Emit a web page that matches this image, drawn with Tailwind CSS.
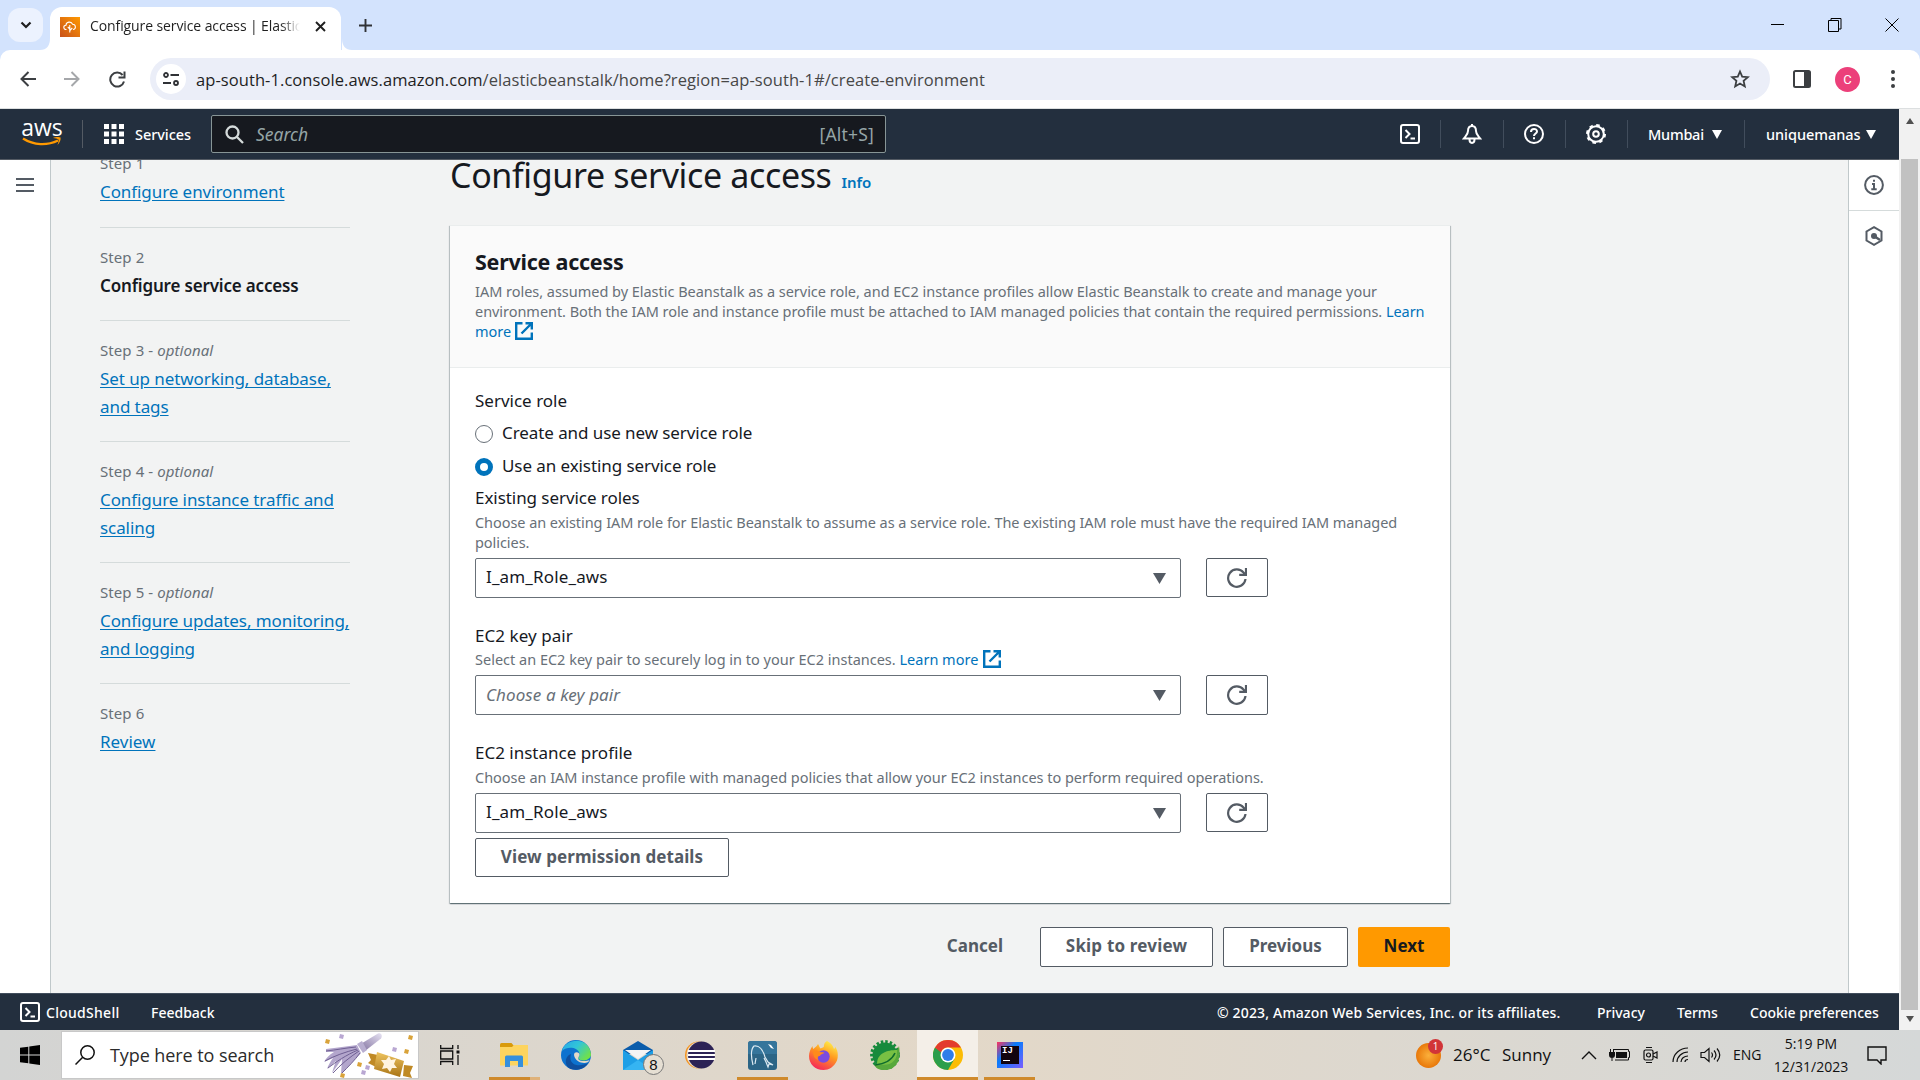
<!DOCTYPE html>
<html lang="en">
<head>
<meta charset="utf-8">
<title>Configure service access | Elastic Beanstalk</title>
<script src="https://cdn.jsdelivr.net/npm/@tailwindcss/browser@4"></script>
</head>
<body class="w-[1920px] h-[1080px] overflow-hidden flex flex-col bg-white font-['Noto_Sans',sans-serif] text-[#16191f] whitespace-nowrap">

<!-- Tab strip -->
<div class="h-[50px] shrink-0 bg-[#d3e3fd] flex items-end pl-2">
  <div class="w-[35px] h-[34px] mb-2 rounded-xl bg-[#ecf2fe] flex items-center justify-center">
    <svg class="w-3 h-3" viewBox="0 0 12 12" fill="none" stroke="#1f1f1f" stroke-width="2.2"><path d="M1.5 3.5 6 8l4.500-4.500"/></svg>
  </div>
  <svg class="w-[10px] h-3 -ml-[3px]" viewBox="0 0 10 12"><path d="M10 0v12H0Q10 12 10 0z" fill="#fff"/></svg>
  <div class="w-[291px] h-[43px] bg-white rounded-t-[12px] flex items-center pl-[10px] pb-[7px]">
    <svg class="w-5 h-5 mt-[3px]" viewBox="0 0 20 20"><defs><linearGradient id="eb" x1="0" y1="1" x2="1" y2="0"><stop offset="0" stop-color="#c8511b"/><stop offset="1" stop-color="#f90"/></linearGradient></defs><rect width="20" height="20" fill="url(#eb)"/><path d="M6.500 12.500C3 12.500 3 8.500 6 8.300 6 4.500 11.500 4 12.500 7.200c3.500-.2 4 5.300.5 5.300M9.800 15.500V8M9.800 12l-2-2M9.800 13.500l2.500-2.500" fill="none" stroke="#fff" stroke-width="1.100"/></svg>
    <div class="ml-[10px] mt-[2px] w-[212px] overflow-hidden text-[14px] leading-5 tracking-[-0.100px] font-['Open_Sans',sans-serif] text-[#1f1f1f] [mask-image:linear-gradient(to_right,black_90%,transparent_99%)]">Configure service access | Elastic</div>
    <svg class="w-[11px] h-[11px] ml-[13px] mt-[2px]" viewBox="0 0 11 11" stroke="#1f1f1f" stroke-width="1.900"><path d="M1 1l9 9M10 1l-9 9"/></svg>
  </div>
  <svg class="w-3 h-3" viewBox="0 0 10 12"><path d="M0 0v12h10Q0 12 0 0z" fill="#fff"/></svg>
  <svg class="w-[13px] h-[13px] ml-[6px] mb-[18px]" viewBox="0 0 13 13" stroke="#303236" stroke-width="1.900"><path d="M6.500 0v13M0 6.500h13"/></svg>
  <div class="flex ml-auto pr-[21px] mb-[18px] items-center gap-[43px]">
    <svg class="w-[14px] h-[14px]" viewBox="0 0 14 14" stroke="#000"><path d="M0 6.500h13"/></svg>
    <svg class="w-[14px] h-[14px]" viewBox="0 0 14 14" fill="none" stroke="#000"><path d="M.5 2.500h10v11H.5zM3 2.500V.5h10v10.500h-2"/></svg>
    <svg class="w-[14px] h-[14px]" viewBox="0 0 14 14" stroke="#000"><path d="M.5.500l13 13M13.500.5l-13 13"/></svg>
  </div>
</div>

<!-- Address bar -->
<div class="h-[59px] shrink-0 bg-[#d3e3fd]">
<div class="h-full bg-white rounded-t-[10px] border-b border-[#dcdfe0] flex items-center pl-5">
  <svg class="w-4 h-4" viewBox="0 0 16 16" fill="none" stroke="#3c3f42" stroke-width="2"><path d="M16 8H2M8.500 1 1.500 8l7 7"/></svg>
  <svg class="w-4 h-4 ml-7" viewBox="0 0 16 16" fill="none" stroke="#a5a7aa" stroke-width="2"><path d="M0 8h14M7.500 1l7 7-7 7"/></svg>
  <svg class="w-[17px] h-[17px] ml-[29px]" viewBox="0 0 17 17" fill="none" stroke="#3c3f42" stroke-width="2"><path d="M15 10.500A7 7 0 1 1 13.600 4M15.500.5v6h-6"/></svg>
  <div class="w-[1620px] h-[42px] ml-6 rounded-full bg-[#ebeef8] flex items-center pl-[6px] pr-[20px]">
    <div class="w-[30px] h-[30px] rounded-full bg-white flex items-center justify-center">
      <svg class="w-4 h-[14px]" viewBox="0 0 16 14" fill="none" stroke="#303236" stroke-width="1.800"><circle cx="3" cy="3" r="2"/><path d="M7.500 3H16M0 11h8"/><circle cx="13" cy="11" r="2"/></svg>
    </div>
    <div class="ml-[10px] mt-[2px] text-[16.500px] leading-6 tracking-[0.075px] text-[#474747] font-['Open_Sans',sans-serif]"><span class="text-[#1f1f1f]">ap-south-1.console.aws.amazon.com</span>/elasticbeanstalk/home?region=ap-south-1#/create-environment</div>
    <svg class="w-5 h-5 ml-auto" viewBox="0 0 20 20" fill="none" stroke="#3c3f42" stroke-width="1.800"><path d="M10 2.500l2.200 5.200 5.600.5-4.200 3.700 1.200 5.500L10 14.500l-4.800 2.900 1.200-5.500L2.200 8.200l5.600-.5z"/></svg>
  </div>
  <svg class="w-[18px] h-[18px] ml-[23px]" viewBox="0 0 18 18"><rect x="1" y="1" width="16" height="16" rx="1.500" fill="none" stroke="#3c3f42" stroke-width="2"/><path d="M11 1h6v16h-6z" fill="#3c3f42"/></svg>
  <div class="w-[25px] h-[25px] ml-[24px] rounded-full bg-[#ec407a] text-white text-[13px] leading-[25px] text-center font-[Roboto,sans-serif]">C</div>
  <svg class="w-1 h-[18px] ml-[31px]" viewBox="0 0 4 18" fill="#3c3f42"><circle cx="2" cy="2" r="2"/><circle cx="2" cy="9" r="2"/><circle cx="2" cy="16" r="2"/></svg>
</div>
</div>

<div class="flex h-[921px] shrink-0">
<div class="w-[1899px] flex flex-col">

<!-- AWS navigation -->
<div class="h-[51px] shrink-0 bg-[#232f3e] border-b border-[#545b64] flex items-center text-white text-[14.500px] leading-5 font-medium">
  <div class="ml-[22px] w-[40px] h-[30px] flex flex-col items-center">
    <span class="text-[23px] leading-[18px] -mt-[1px] font-medium font-['Open_Sans',sans-serif] h-[18px]">aws</span>
    <svg class="w-10 h-3" viewBox="0 0 40 12"><path d="M1 2.500C12 9.500 25 9.800 36 4.500" fill="none" stroke="#f90" stroke-width="2.400"/><path d="M31 2c3-1.500 6.500-1 7.500-.5.5 2-.5 5-3 7.500 1-3 1.500-4.500 1-5.500-1-1-3-1.200-5.500-1.500z" fill="#f90"/></svg>
  </div>
  <div class="ml-[20px] w-px h-7 bg-[#545b64]"></div>
  <svg class="ml-[21px] w-5 h-5" viewBox="0 0 20 20" fill="#fff"><path d="M0 0h5v5H0zM7.500 0h5v5h-5zM15 0h5v5h-5zM0 7.500h5v5H0zM7.500 7.500h5v5h-5zM15 7.500h5v5h-5zM0 15h5v5H0zM7.500 15h5v5h-5zM15 15h5v5h-5z"/></svg>
  <span class="ml-[11px] w-[55px] tracking-[-0.050px]">Services</span>
  <div class="ml-[21px] w-[675px] h-[38px] bg-[#16191f] border border-[#879596] rounded-[2px] flex items-center px-[13px] text-[#95a5a6] text-[17.500px] leading-6 font-normal">
    <svg class="w-[19px] h-[19px]" viewBox="0 0 19 19" fill="none" stroke="#d5dbdb" stroke-width="2.300"><circle cx="7.500" cy="7.500" r="6"/><path d="M12 12l6 6"/></svg>
    <span class="ml-[12px] -mt-px italic">Search</span>
    <span class="ml-auto -mt-px -mr-[2px] tracking-[0.200px]">[Alt+S]</span>
  </div>
  <div class="ml-auto flex items-center">
    <svg class="w-5 h-5" viewBox="0 0 20 20" fill="none" stroke="#fff" stroke-width="2"><rect x="1" y="1" width="18" height="18" rx="2"/><path d="M5.500 6l4 4-4 4M10.500 14.500H15"/></svg>
    <div class="ml-5 w-px h-7 bg-[#414d5c]"></div>
    <svg class="ml-[21px] w-5 h-5" viewBox="0 0 20 20" fill="none" stroke="#fff" stroke-width="2"><path d="M10 2C6.500 2 6 5 6 7 6 10.500 3.500 12 1.800 14.500h16.400C16.500 12 14 10.500 14 7 14 5 13.500 2 10 2zM7.500 15.500c0 4.500 5 4.500 5 0M10 0v2"/></svg>
    <div class="ml-[21px] w-px h-7 bg-[#414d5c]"></div>
    <svg class="ml-[20px] w-5 h-5" viewBox="0 0 20 20" fill="none" stroke="#fff" stroke-width="2"><circle cx="10" cy="10" r="9"/><path d="M7 8c0-4 6-4 6-.5 0 2-3 2-3 4.500M10 13.300v2"/></svg>
    <div class="ml-[21px] w-px h-7 bg-[#414d5c]"></div>
    <svg class="ml-[20px] w-5 h-5" viewBox="0 0 20 20" fill="none" stroke="#fff" stroke-width="2"><circle cx="10" cy="10" r="7.800"/><circle cx="10" cy="10" r="9" stroke-width="2" stroke-dasharray="3.530 3.530"/><circle cx="10" cy="10" r="2.800"/></svg>
    <div class="ml-[21px] w-px h-7 bg-[#414d5c]"></div>
    <span class="ml-[20px] w-[55px] tracking-[-0.250px]">Mumbai</span>
    <svg class="ml-[9px] w-[10px] h-[9px]" viewBox="0 0 10 9"><path d="M0 0h10L5 9z" fill="#fff"/></svg>
    <div class="ml-[22px] w-px h-7 bg-[#414d5c]"></div>
    <span class="ml-[21px] w-[92px] tracking-[-0.050px]">uniquemanas</span>
    <svg class="ml-2 mr-[23px] w-[10px] h-[9px]" viewBox="0 0 10 9"><path d="M0 0h10L5 9z" fill="#fff"/></svg>
  </div>
</div>

<!-- Page -->
<div class="h-[833px] flex bg-[#f2f3f3] overflow-hidden">
  <div class="w-[51px] shrink-0 bg-white border-r border-[#c0c8ca] pt-[17px] pl-4">
    <svg class="w-[18px] h-4" viewBox="0 0 18 16" stroke="#545b64" stroke-width="2"><path d="M0 2h18M0 8h18M0 14h18"/></svg>
  </div>

  <div class="w-[250px] ml-[49px] shrink-0 -mt-[6px] text-[17px] leading-7 tracking-[-0.080px] text-[#0073bb]">
    <div class="pb-[21px] border-b border-[#d5dbdb]">
      <div class="-mt-px text-[15px] leading-5 tracking-[0.080px] text-[#687078]">Step 1</div>
      <div class="mt-[5px] underline underline-offset-2">Configure environment</div>
    </div>
    <div class="pt-[19px] pb-5 border-b border-[#d5dbdb]">
      <div class="text-[15px] leading-5 tracking-[0.080px] text-[#687078]">Step 2</div>
      <div class="mt-[5px] font-semibold tracking-[-0.170px] text-[#16191f]">Configure service access</div>
    </div>
    <div class="pt-[19px] pb-5 border-b border-[#d5dbdb]">
      <div class="text-[15px] leading-5 tracking-[0.080px] text-[#687078]">Step 3 - <i>optional</i></div>
      <div class="mt-[5px] underline underline-offset-2">Set up networking, database,<br>and tags</div>
    </div>
    <div class="pt-[19px] pb-5 border-b border-[#d5dbdb]">
      <div class="text-[15px] leading-5 tracking-[0.080px] text-[#687078]">Step 4 - <i>optional</i></div>
      <div class="mt-[5px] underline underline-offset-2">Configure instance traffic and<br>scaling</div>
    </div>
    <div class="pt-[19px] pb-5 border-b border-[#d5dbdb]">
      <div class="text-[15px] leading-5 tracking-[0.080px] text-[#687078]">Step 5 - <i>optional</i></div>
      <div class="mt-[5px] underline underline-offset-2">Configure updates, monitoring,<br>and logging</div>
    </div>
    <div class="pt-[19px]">
      <div class="text-[15px] leading-5 tracking-[0.080px] text-[#687078]">Step 6</div>
      <div class="mt-[5px] tracking-normal underline underline-offset-2">Review</div>
    </div>
  </div>

  <div class="w-[1000px] ml-[100px] shrink-0 -mt-[7px]">
    <div class="h-[44px] flex items-baseline text-[34px] leading-[44px] tracking-[-0.360px]">Configure service access<span class="ml-[10px] text-[15px] tracking-[-0.100px] font-semibold text-[#0073bb]">Info</span></div>
    <div class="mt-[28px] h-[678px] bg-white shadow-[0_1px_1px_0_rgba(0,28,36,0.4),1px_1px_1px_0_rgba(0,28,36,0.18),-1px_1px_1px_0_rgba(0,28,36,0.18)] border-t border-[#eaeded]">
      <div class="h-[142px] bg-[#fafafa] border-b border-[#eaeded] px-[25px] pt-[22px]">
        <div class="text-[21.500px] leading-7 tracking-[-0.250px] font-bold">Service access</div>
        <div class="mt-[5px] text-[14.500px] leading-5 tracking-[-0.025px] text-[#687078]">IAM roles, assumed by Elastic Beanstalk as a service role, and EC2 instance profiles allow Elastic Beanstalk to create and manage your<br><span class="tracking-[-0.045px]">environment. Both the IAM role and instance profile must be attached to IAM managed policies that contain the required permissions. <span class="text-[#0073bb]">Learn</span></span></div>
        <div class="flex items-center text-[14.500px] leading-5 text-[#0073bb]">more<svg class="ml-1 w-[18px] h-[18px]" viewBox="0 0 18 18" fill="none" stroke="#0073bb" stroke-width="2.400"><path d="M7.500 1.200H1.200v15.600h15.600v-6.300M10.500 1.200h6.300v6.300M16.500 1.500 6.500 11.500"/></svg></div>
      </div>
      <div class="px-[25px] pt-[19px] text-[17px] leading-7">
        <div>Service role</div>
        <div class="mt-1 flex items-center tracking-[-0.080px]"><div class="w-[18px] h-[18px] mt-px rounded-full border border-[#687078]"></div><span class="ml-[9px]">Create and use new service role</span></div>
        <div class="mt-[5px] flex items-center tracking-[-0.080px]"><div class="w-[18px] h-[18px] mt-px rounded-full border-[5.500px] border-[#0073bb]"></div><span class="ml-[9px]">Use an existing service role</span></div>
        <div class="mt-1 tracking-[-0.060px]">Existing service roles</div>
        <div class="text-[14.500px] leading-5 tracking-[-0.060px] text-[#687078]">Choose an existing IAM role for Elastic Beanstalk to assume as a service role. The existing IAM role must have the required IAM managed<br>policies.</div>
        <div class="mt-[6px] flex items-start">
          <div class="w-[706px] h-10 border border-[#687078] rounded-[2px] flex items-center justify-between pl-[10px] pr-[14px]"><span class="-mt-[2px] tracking-[0.150px]">I_am_Role_aws</span><svg class="w-[13px] h-[11px]" viewBox="0 0 13 11"><path d="M0 0h13L6.500 11z" fill="#545b64"/></svg></div>
          <div class="ml-[25px] w-[62px] h-[39px] border border-[#545b64] rounded-[2px] flex items-center justify-center"><svg class="w-5 h-5" viewBox="0 0 20 20" fill="none" stroke="#545b64" stroke-width="2.200"><path d="M18.500 11A8.700 8.700 0 1 1 16.600 4.600L18 6.500M19 0v6.800h-6.800"/></svg></div>
        </div>
        <div class="mt-[24px] tracking-[0.050px]">EC2 key pair</div>
        <div class="-mt-px flex items-center text-[14.500px] leading-5 text-[#687078]"><span>Select an EC2 key pair to securely log in to your EC2 instances. <span class="text-[#0073bb]">Learn more</span></span><svg class="ml-[5px] w-[18px] h-[18px]" viewBox="0 0 18 18" fill="none" stroke="#0073bb" stroke-width="2.400"><path d="M7.500 1.200H1.200v15.600h15.600v-6.300M10.500 1.200h6.300v6.300M16.500 1.500 6.500 11.500"/></svg></div>
        <div class="mt-[6px] flex items-start">
          <div class="w-[706px] h-10 border border-[#687078] rounded-[2px] flex items-center justify-between pl-[10px] pr-[14px]"><span class="-mt-px italic tracking-[0.100px] text-[#687078]">Choose a key pair</span><svg class="w-[13px] h-[11px]" viewBox="0 0 13 11"><path d="M0 0h13L6.500 11z" fill="#545b64"/></svg></div>
          <div class="ml-[25px] w-[62px] h-10 border border-[#545b64] rounded-[2px] flex items-center justify-center"><svg class="w-5 h-5" viewBox="0 0 20 20" fill="none" stroke="#545b64" stroke-width="2.200"><path d="M18.500 11A8.700 8.700 0 1 1 16.600 4.600L18 6.500M19 0v6.800h-6.800"/></svg></div>
        </div>
        <div class="mt-[24px]">EC2 instance profile</div>
        <div class="text-[14.500px] leading-5 tracking-[-0.025px] text-[#687078]">Choose an IAM instance profile with managed policies that allow your EC2 instances to perform required operations.</div>
        <div class="mt-[6px] flex items-start">
          <div class="w-[706px] h-10 border border-[#687078] rounded-[2px] flex items-center justify-between pl-[10px] pr-[14px]"><span class="-mt-[2px] tracking-[0.150px]">I_am_Role_aws</span><svg class="w-[13px] h-[11px]" viewBox="0 0 13 11"><path d="M0 0h13L6.500 11z" fill="#545b64"/></svg></div>
          <div class="ml-[25px] w-[62px] h-[39px] border border-[#545b64] rounded-[2px] flex items-center justify-center"><svg class="w-5 h-5" viewBox="0 0 20 20" fill="none" stroke="#545b64" stroke-width="2.200"><path d="M18.500 11A8.700 8.700 0 1 1 16.600 4.600L18 6.500M19 0v6.800h-6.800"/></svg></div>
        </div>
        <div class="mt-[5px] w-[254px] h-[39px] border border-[#545b64] rounded-[2px] flex items-center justify-center font-bold text-[#545b64] tracking-[0.080px] pb-[2px]">View permission details</div>
      </div>
    </div>
    <div class="mt-6 flex justify-end items-center text-[17px] leading-7 font-bold text-[#545b64]">
      <span class="mr-[37px] -mt-[2px]">Cancel</span>
      <div class="w-[173px] h-10 bg-white border border-[#545b64] rounded-[2px] flex items-center justify-center pb-[2px] tracking-[0.180px]">Skip to review</div>
      <div class="ml-[10px] w-[125px] h-10 bg-white border border-[#545b64] rounded-[2px] flex items-center justify-center pb-[2px]">Previous</div>
      <div class="ml-[10px] w-[92px] h-10 bg-[#f90] text-[#16191f] rounded-[2px] flex items-center justify-center pb-[2px]">Next</div>
    </div>
  </div>

  <div class="ml-auto w-[51px] shrink-0 bg-white border-l border-[#c0c8ca]">
    <div class="h-[51px] border-b border-[#d5dbdb] flex items-center justify-center"><svg class="w-5 h-5" viewBox="0 0 20 20" fill="none" stroke="#545b64" stroke-width="2"><circle cx="10" cy="10" r="8.900"/><path d="M10 4.800v2M8 9h2v5M7.300 14.200h5.400"/></svg></div>
    <div class="h-[50px] flex items-center justify-center"><svg class="w-5 h-5" viewBox="0 0 20 20" fill="none" stroke="#545b64" stroke-width="2"><path d="M10 1.200l7.500 4.300v9L10 18.800l-7.500-4.300v-9z"/><circle cx="10" cy="10" r="3" fill="#545b64" stroke="none"/><path d="M10 10l6 4" stroke-width="2.400"/></svg></div>
  </div>
</div>

<!-- Console footer -->
<div class="h-[37px] shrink-0 bg-[#232f3e] border-t border-[#414d5c] flex items-center pl-5 pr-5 pt-px text-white text-[14px] leading-5 font-medium">
  <svg class="w-5 h-5 -mt-px" viewBox="0 0 20 20" fill="none" stroke="#fff" stroke-width="2"><rect x="1" y="1" width="18" height="18" rx="2"/><path d="M5.500 6l4 4-4 4M10.500 14.500H15"/></svg>
  <span class="ml-[6px] w-[74px] tracking-[0.280px]">CloudShell</span>
  <span class="ml-[31px] w-[64px]">Feedback</span>
  <span class="ml-auto w-[343px] tracking-[0.160px]">© 2023, Amazon Web Services, Inc. or its affiliates.</span>
  <span class="ml-[37px] w-[49px]">Privacy</span>
  <span class="ml-[31px] w-[42px]">Terms</span>
  <span class="ml-[31px] w-[129px]">Cookie preferences</span>
</div>
</div>

<!-- Scrollbar -->
<div class="w-[21px] bg-[#f1f1f1] flex flex-col items-center">
  <svg class="w-2 h-[6px] mt-[9px]" viewBox="0 0 8 6"><path d="M4 0l4 6H0z" fill="#505050"/></svg>
  <div class="w-[17px] h-[851px] mt-[35px] bg-[#c1c1c1]"></div>
  <svg class="w-2 h-[6px] mt-[6px]" viewBox="0 0 8 6"><path d="M4 6l4-6H0z" fill="#505050"/></svg>
</div>
</div>

<!-- Taskbar -->
<div class="h-[50px] shrink-0 bg-linear-to-r from-[#d3d4d3] via-[#e3d8c8] to-[#d5d8d8] flex items-center font-['Open_Sans',sans-serif] text-[#111]">
  <svg class="ml-5 w-5 h-5" viewBox="0 0 20 20"><path d="M0 2.800 8.300 1.700v7.800H0zM9.300 1.500 20 0v9.500H9.300zM0 10.500h8.300v7.800L0 17.200zM9.300 10.500H20V20L9.300 18.500z"/></svg>
  <div class="ml-[21px] w-[358px] h-[48px] bg-white border border-[#c8c8c8] flex items-center pl-[13px]">
    <svg class="w-5 h-5" viewBox="0 0 20 20" fill="none" stroke="#111" stroke-width="1.500"><circle cx="12.500" cy="7.500" r="6.700"/><path d="M7.700 12.300.5 19.500"/></svg>
    <span class="ml-[15px] text-[18px] leading-6 tracking-[-0.080px] text-[#2b2b2b]">Type here to search</span>
    <svg class="ml-auto mr-[3px] w-[92px] h-[46px]" viewBox="0 0 92 46">
      <defs><linearGradient id="pop" x1="0" y1="1" x2="1" y2="0"><stop offset="0" stop-color="#7d6d9c"/><stop offset="1" stop-color="#e6e2f2"/></linearGradient><linearGradient id="gold" x1="0" y1="0" x2="0" y2="1"><stop offset="0" stop-color="#eec45f"/><stop offset="1" stop-color="#a97416"/></linearGradient></defs>
      <path d="M36 13 55 1.500c3-1 5 2 3 5L42 19z" fill="url(#pop)"/><path d="M34 12l6 9 4-3-5-9z" fill="#b8aed0"/>
      <path d="M34 13C24 14 14 16 3 17l0 3 8 0C6 23 3 26 1 30l9-4c-3 4-5 8-6 11l9-8c-2 5-3 9-4 12l10-14-1 15 20-21z" fill="#b3a6cc"/>
      <g fill="none" stroke="#6f5f93" stroke-width="1"><path d="M33 15C22 16 13 18 3 19M34 17C22 20 11 24 2 29M35 18C23 23 13 30 5 36M36 19C27 25 17 33 10 41M37 21C32 28 24 36 19 41"/></g>
      <path d="M45 21l10 2-2 12-8-4 3-3zM90 34l-9-1-1 11 9 2-2-5z" fill="#c08a25"/><path d="M54 20l27 9-4 16-26-8z" fill="url(#gold)"/><path d="M66 24l2 4 5-1-2 5 3 4-5 0-2 4-3-4-5 1 2-5-3-4 5 0z" fill="#fff4df"/>
      <g fill="#d9a33a"><path d="M3 7l4 1-1 4-4-1zM86 3l4 1-1 4-4-1zM82 17l4 1-1 4-4-1zM35 30l4 1-1 4-4-1zM18 41l4 1-1 4-4-1z"/></g><g fill="#b9a7d2"><path d="M17 2l4 1-1 4-4-1zM70 15l4 1-1 4-4-1zM43 33l4 1-1 4-4-1zM39 38l4 1-1 4-4-1z"/></g>
    </svg>
  </div>
  <svg class="ml-[21px] w-5 h-5" viewBox="0 0 20 20" fill="none" stroke="#111" stroke-width="1.300"><path d="M.7 0v3.500h12V0M.7 20v-3.500h12V20M.7 6h12v8H.7zM18 0v4M18 10v10"/><path d="M18 5.500v3" stroke-width="3"/></svg>
  <div class="ml-[29px] w-[51px] h-[50px] relative flex justify-center items-center">
    <svg class="w-7 h-6 mr-[2px]" viewBox="0 0 28 24"><path d="M0 1.500Q0 0 1.500 0h10l2.500 3-2 3H0z" fill="#d99a0b"/><path d="M0 4h12l2-2h14v20.500H0z" fill="#fdd45f"/><path d="M5 24V14q0-1.500 1.500-1.500h15q1.500 0 1.500 1.500v10h-5v-6h-8v6z" fill="#3690dc"/></svg>
    <div class="absolute bottom-0 inset-x-0 h-[3px] flex"><div class="w-[41px] bg-[#cf8a2c]"></div><div class="w-[10px] bg-[#dfb27a]"></div></div>
  </div>
  <svg class="ml-[21px] w-[30px] h-[30px]" viewBox="0 0 30 30"><defs><linearGradient id="e1" x1="0" y1="0" x2="1" y2=".6"><stop offset="0" stop-color="#2aa6e8"/><stop offset=".5" stop-color="#30c5d8"/><stop offset="1" stop-color="#6fe04d"/></linearGradient></defs><circle cx="15" cy="15" r="15" fill="#0d72cf"/><path d="M1 11C4-2 28-4 30 14c.5 6-9 8-12.500 5-1-1.500 1.500-2 1-5.500C17 7 6 6 1 11z" fill="url(#e1)"/><path d="M10 14c-3 10 6 14 17.500 9C22 31 10 32 6 26c-3-5 0-11 4-12z" fill="#0f4f9e"/><path d="M13 15c0-4 6-3 5.500 0-.5 2-2 3-1 4.500 2 2 8 2 11 .5-1 5-14 4-15.500-5z" fill="#e3d9c9"/></svg>
  <div class="ml-8 relative w-[30px] h-[29px]">
    <svg class="w-[30px] h-[29px]" viewBox="0 0 30 29"><path d="M0 9 15 0l15 9v4H0z" fill="#0a5cab"/><path d="M0 9l15 10L30 9v20H0z" fill="#1e9fe6"/><path d="M0 29 15 19l15 10z" fill="#35b4f2"/><path d="M2 9h26L15 18z" fill="#f4f4f4"/></svg>
    <div class="absolute left-[20px] top-[13px] w-[21px] h-[21px] rounded-full border border-[#777] bg-[#e6dfd3] text-[15px] leading-[19px] text-center font-['Liberation_Sans',sans-serif]">8</div>
  </div>
  <svg class="ml-8 w-[30px] h-[28px]" viewBox="0 0 30 28"><circle cx="13.500" cy="14" r="13.500" fill="#f7941e"/><circle cx="15" cy="14" r="13.500" fill="#e3d9c9"/><circle cx="16.500" cy="14" r="13.500" fill="#2c2255"/><path d="M3 10h27M3 14h27M3 18h27" stroke="#fff" stroke-width="1.800"/></svg>
  <div class="ml-[22px] w-[51px] h-[50px] relative flex justify-center items-center">
    <svg class="w-[29px] h-[29px]" viewBox="0 0 29 29"><rect width="29" height="29" rx="3" fill="#2c6586"/><path d="M0 3q0-3 3-3h23q3 0 3 3v10H0z" fill="#35759b"/><path d="M5 24C3 16 3 8 6 5c5-1 9 4 11 11l3 5 5 3-4-1-1 3-2-5-2-4M8 17l-1 6" fill="none" stroke="#dceaf2" stroke-width="1.200"/><path d="M20 3l3 1 3 4-3-1z" fill="#fff"/></svg>
    <div class="absolute bottom-0 inset-x-0 h-[3px] bg-[#cf8a2c]"></div>
  </div>
  <svg class="ml-[21px] w-[29px] h-[29px]" viewBox="0 0 29 29"><defs><linearGradient id="ff" x1=".8" y1="0" x2=".3" y2="1"><stop offset="0" stop-color="#fff44f"/><stop offset=".45" stop-color="#ff9a1f"/><stop offset="1" stop-color="#f5245c"/></linearGradient></defs><path d="M18 0c5 3 6 5 7 8 1-.5 1-1.500 1-2.500 3 4 3.500 9 2 14C25 26 20 29 14.500 29 6 29 0 23 0 15c0-4 1.500-7 3.500-10 0 1.500.5 2.500 1 3C6 6 8 5.500 9 3c1 1 1 3 2.500 4.500C13 6.500 15 7 15 4.500 15 3 16 1 18 0z" fill="url(#ff)"/><circle cx="14.500" cy="15.500" r="6.200" fill="#7a4be0"/><path d="M4 10c3-1 5 0 7 1 2 .5 4 0 4.500 1-2 1-4 1-4.500 3-2-.5-3 2-1.500 4C5 18 4 14 4 10z" fill="#ff8a1c"/></svg>
  <svg class="ml-[32px] w-[30px] h-[30px]" viewBox="0 0 30 30"><circle cx="15" cy="15" r="12.500" fill="#178a3c"/><circle cx="15" cy="15" r="13.400" fill="none" stroke="#178a3c" stroke-width="3" stroke-dasharray="2.500 2"/><path d="M29 6c2 12-1 24-15 24-5 0-8-2-10-5C16 25 25 17 29 6z" fill="#57a83c"/><path d="M27 10c-10 0-20 3-20 14 12 3 21-2 20-14z" fill="#78c043"/><path d="M5 25C14 24 22 20 25 13" fill="none" stroke="#0e6b2d" stroke-width="1.500"/></svg>
  <div class="ml-[17px] w-[61px] h-[50px] relative flex justify-center items-center bg-[#f4efe8]">
    <svg class="w-[30px] h-[30px]" viewBox="0 0 30 30"><circle cx="15" cy="15" r="15" fill="#fbbc05"/><path d="M2 7.500A15 15 0 0 0 15 30l6.500-11.200L15 15z" fill="#2b9e4b"/><path d="M2 7.500A15 15 0 0 1 28 7.500H15a7.500 7.500 0 0 0-7 5z" fill="#e33b2e"/><circle cx="15" cy="15" r="7.500" fill="#fff"/><circle cx="15" cy="15" r="5.900" fill="#2f7de9"/></svg>
    <div class="absolute bottom-0 inset-x-0 h-[3px] bg-[#cf8a2c]"></div>
  </div>
  <div class="ml-[6px] w-[51px] h-[50px] relative flex justify-center items-center">
    <svg class="w-[26px] h-[26px]" viewBox="0 0 26 26"><defs><linearGradient id="ij" x1="0" y1="0" x2="1" y2="1"><stop offset="0" stop-color="#fe315d"/><stop offset=".4" stop-color="#087cfa"/><stop offset="1" stop-color="#7a5cff"/></linearGradient></defs><rect width="26" height="26" fill="url(#ij)"/><path d="M4 4h18v18H4z" fill="#12040f"/></svg>
    <span class="absolute left-[18px] top-[16px] text-[9px] leading-[10px] font-bold text-white font-['Liberation_Mono',monospace]">IJ</span>
    <div class="absolute left-[19px] top-[30px] w-[7px] h-px bg-white"></div>
    <div class="absolute bottom-0 inset-x-0 h-[3px] bg-[#cf8a2c]"></div>
  </div>
  <div class="ml-[381px] relative w-[28px] h-[30px]">
    <svg class="w-[28px] h-[30px]" viewBox="0 0 28 30"><defs><radialGradient id="sun"><stop offset="0" stop-color="#fbb03b"/><stop offset="1" stop-color="#e8780a"/></radialGradient></defs><circle cx="12.500" cy="15.500" r="12.500" fill="url(#sun)"/></svg>
    <div class="absolute left-[12px] -top-[1px] w-[15px] h-[15px] rounded-full bg-[#d13438] text-white text-[10px] leading-[15px] text-center">1</div>
  </div>
  <span class="ml-[9px] w-[38px] text-[17px] leading-6">26°C</span>
  <span class="ml-[11px] w-[49px] text-[17px] leading-6">Sunny</span>
  <svg class="ml-[30px] w-4 h-[9px]" viewBox="0 0 16 9" fill="none" stroke="#111" stroke-width="1.400"><path d="M1 8l7-7 7 7"/></svg>
  <svg class="ml-[12px] w-[21px] h-4" viewBox="0 0 21 16"><path d="M7 5h11v6H7z" fill="#111"/><path d="M5 2.500h14.500v2h1v6h-1v2.500H6" fill="none" stroke="#111"/><path d="M0 5h6v3a3 3 0 0 1-6 0zM1 2h1v3H1zM4 2h1v3H4zM2.500 10h1v4h-1z" fill="#111"/></svg>
  <svg class="ml-[13px] w-[15px] h-[18px]" viewBox="0 0 15 18" fill="none" stroke="#111" stroke-width="1.200"><rect x="1" y="4" width="9" height="10" rx="1.500"/><circle cx="5.500" cy="9" r="2"/><path d="M10 8l4-2v6l-4-2M3 1.500h6M3 16.500h6"/></svg>
  <svg class="ml-[14px] w-[18px] h-[16px]" viewBox="0 0 18 16" fill="none" stroke="#111" stroke-width="1.200"><path d="M1 15C1 7 8 1 16 1M5 15C5 9.500 10 5 16 5M9 15c0-3.500 3-6 7-6M13 15c0-1.500 1-2.500 3-2.500"/></svg>
  <svg class="ml-[10px] w-[21px] h-[16px]" viewBox="0 0 21 16" fill="none" stroke="#111" stroke-width="1.200"><path d="M1 5.500h3.500L9 1.500v13l-4.500-4H1zM11.500 5.500q2 2.500 0 5M14 3.500q4 4.500 0 9M17 1.500q5.500 6.500 0 13"/></svg>
  <span class="ml-[12px] w-[29px] text-[14px] leading-5">ENG</span>
  <div class="ml-[11px] w-[76px] flex flex-col items-center text-[14px] leading-[23px]"><span>5:19 PM</span><span>12/31/2023</span></div>
  <svg class="ml-[18px] w-[20px] h-5" viewBox="0 0 20 20" fill="none" stroke="#111" stroke-width="1.400"><path d="M1 2h18v13h-5v4l-4-4H1z"/></svg>
</div>
</body>
</html>
